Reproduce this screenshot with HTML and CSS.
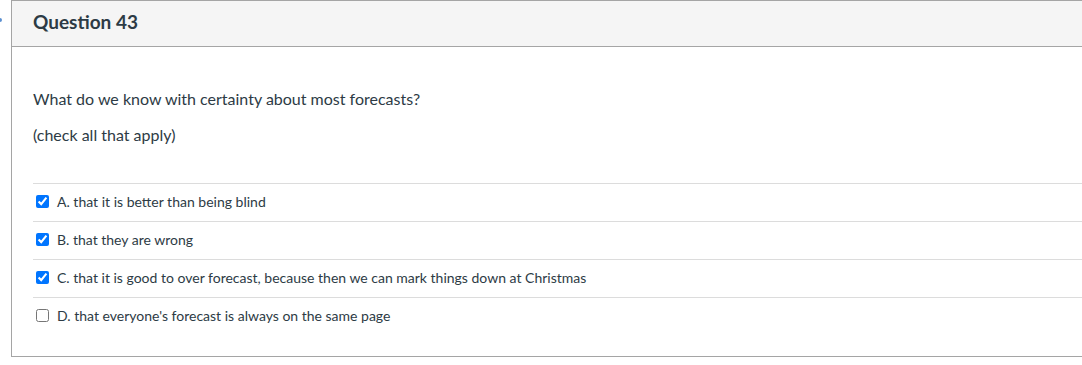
FILE: index.html
```html
<!DOCTYPE html>
<html>
<head>
<meta charset="utf-8">
<link rel="stylesheet" href="styles.css">
</head>
<body>
<div class="page">
  <span class="marker"></span>
  <div class="question">
    <div class="q-header"><h2 class="q-title">Question 43</h2></div>
    <div class="q-body">
      <p class="q-text">What do we know with certainty about most forecasts?</p>
      <p class="q-text">(check all that apply)</p>
      <div class="answers">
        <label class="answer"><input type="checkbox" class="cb" checked><span>A. that it is better than being blind</span></label>
        <label class="answer"><input type="checkbox" class="cb" checked><span>B. that they are wrong</span></label>
        <label class="answer"><input type="checkbox" class="cb" checked><span>C. that it is good to over forecast, because then we can mark things down at Christmas</span></label>
        <label class="answer"><input type="checkbox" class="cb"><span>D. that everyone's forecast is always on the same page</span></label>
      </div>
    </div>
  </div>
</div>
</body>
</html>
```
FILE: styles.css
```css
html, body {
  margin: 0;
  padding: 0;
  background: #fff;
}
body {
  font-family: Lato, "Open Sans", sans-serif;
  color: #2d3b45;
  overflow: hidden;
}
.page {
  position: relative;
  padding-left: 11px;
  width: 1200px;
}
.marker {
  position: absolute;
  left: -2px;
  top: 18px;
  width: 4px;
  height: 4px;
  border-radius: 50%;
  background: #5b8fd0;
}
.question {
  border: 1px solid #a5a5a5;
  border-right: none;
}
.q-header {
  background: #f5f5f5;
  border-bottom: 1px solid #a5a5a5;
  height: 45px;
  display: flex;
  align-items: center;
  padding-left: 21px;
}
.q-title {
  margin: 0;
  font-size: 19px;
  font-weight: 700;
  color: #2d3b45;
  padding-bottom: 5px;
}
.q-body {
  padding: 42px 0 21px 21px;
}
.q-text {
  margin: 0 0 16px;
  font-size: 16px;
  line-height: 20px;
}
.answers {
  margin-top: 38px;
}
.answer {
  display: flex;
  align-items: center;
  height: 37px;
  box-sizing: content-box;
  border-top: 1px solid #dcdcdc;
  font-size: 14px;
  padding-left: 3px;
}
.answer span {
  padding-bottom: 3px;
}
.cb {
  margin: 0 8px 3px 0;
  width: 13px;
  height: 13px;
}
```
